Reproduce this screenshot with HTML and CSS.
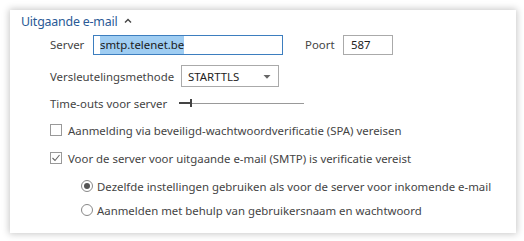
FILE: index.html
```html
<!DOCTYPE html>
<html>
<head>
<meta charset="utf-8">
<link rel="stylesheet" href="styles.css">
</head>
<body>
<div class="card">
  <div class="title">
    <span class="title-text">Uitgaande e-mail</span>
    <svg class="caret" width="8" height="6" viewBox="0 0 8 6"><polyline points="1,4.5 4,1.5 7,4.5" fill="none" stroke="#444" stroke-width="1.4"/></svg>
  </div>
  <div class="row row-server">
    <span class="lbl lbl-server">Server</span>
    <div class="input input-focus"><span class="sel">smtp.telenet.be</span></div>
    <span class="lbl lbl-port">Poort</span>
    <div class="input input-port">587</div>
  </div>
  <div class="row row-enc">
    <span class="lbl lbl-enc">Versleutelingsmethode</span>
    <div class="select">
      <span>STARTTLS</span>
      <svg class="arrow" width="8" height="4" viewBox="0 0 8 4"><polygon points="0.5,0 7.5,0 4,3.8" fill="#666"/></svg>
    </div>
  </div>
  <div class="row row-time">
    <span class="lbl lbl-time">Time-outs voor server</span>
    <div class="slider"><span class="fill"></span><span class="thumb"></span><span class="track"></span></div>
  </div>
  <div class="check-row first">
    <span class="box"></span>
    <span class="txt">Aanmelding via beveiligd-wachtwoordverificatie (SPA) vereisen</span>
  </div>
  <div class="check-row second">
    <span class="box"><svg width="10" height="10" viewBox="0 0 10 10"><polyline points="1.5,5 4,7.5 8.5,2" fill="none" stroke="#666" stroke-width="1.1"/></svg></span>
    <span class="txt">Voor de server voor uitgaande e-mail (SMTP) is verificatie vereist</span>
  </div>
  <div class="radio-row r1">
    <span class="radio on"></span>
    <span class="txt">Dezelfde instellingen gebruiken als voor de server voor inkomende e-mail</span>
  </div>
  <div class="radio-row r2">
    <span class="radio"></span>
    <span class="txt">Aanmelden met behulp van gebruikersnaam en wachtwoord</span>
  </div>
</div>
</body>
</html>
```
FILE: styles.css
```css
html, body { margin: 0; padding: 0; background: #fff; }
body { width: 524px; height: 241px; overflow: hidden; font-family: "Noto Sans", "Open Sans", sans-serif; font-size: 11.4px; color: #444; }
.card {
  margin: 10px 0 0 10px;
  width: 506px;
  height: 223px;
  background: #fff;
  box-shadow: 0 0 7px 1px rgba(0,0,0,0.22);
  box-sizing: border-box;
  padding-top: 2px;
}
.title { display: flex; align-items: center; padding-left: 11px; height: 18px; }
.title-text { font-size: 12.4px; letter-spacing: -0.2px; color: #2a5a96; }
.caret { margin-left: 7px; margin-top: -1px; }
.row { display: flex; align-items: center; padding-left: 40px; }
.row-server { margin-top: 4px; height: 21px; }
.lbl { white-space: nowrap; }
.lbl-server { width: 43px; }
.lbl-port { margin-left: 22px; width: 38px; }
.lbl-enc { width: 131px; }
.lbl-time { width: 129px; }
.input { box-sizing: border-box; height: 20px; border: 1px solid #aaa; display: flex; align-items: center; padding-left: 6px; color: #222; }
.input-focus { width: 190px; border-color: #3d7ebf; }
.input-port { width: 50px; padding-left: 7px; }
.sel { background: #9fcdf2; color: #1a1a1a; padding: 1px 0; line-height: 16px; }
.row-enc { margin-top: 10px; height: 22px; }
.select { box-sizing: border-box; width: 98px; height: 22px; border: 1px solid #aaa; display: flex; align-items: center; justify-content: space-between; padding: 0 7px 0 6px; color: #222; }
.arrow { margin-top: 1px; }
.row-time { margin-top: 5px; height: 22px; }
.slider { position: relative; width: 125px; height: 9px; display: flex; align-items: center; }
.slider .fill { width: 11px; height: 2px; background: #444; }
.slider .thumb { width: 2px; height: 8px; background: #444; }
.slider .track { flex: 1; height: 1px; background: #999; }
.check-row, .radio-row { display: flex; align-items: center; height: 16px; }
.check-row { padding-left: 40px; }
.check-row.first { margin-top: 8px; }
.check-row.second { margin-top: 12px; }
.radio-row { padding-left: 71px; }
.radio-row.r1 { margin-top: 12px; }
.radio-row.r2 { margin-top: 8px; }
.box { box-sizing: border-box; width: 12px; height: 12px; border: 1px solid #999; display: flex; align-items: center; justify-content: center; margin-right: 6px; }
.radio { box-sizing: border-box; width: 12px; height: 12px; border: 1px solid #888; border-radius: 50%; display: flex; align-items: center; justify-content: center; margin-right: 4px; }
.radio.on::after { content: ""; width: 6px; height: 6px; border-radius: 50%; background: #555; }
.txt { white-space: nowrap; }
```
